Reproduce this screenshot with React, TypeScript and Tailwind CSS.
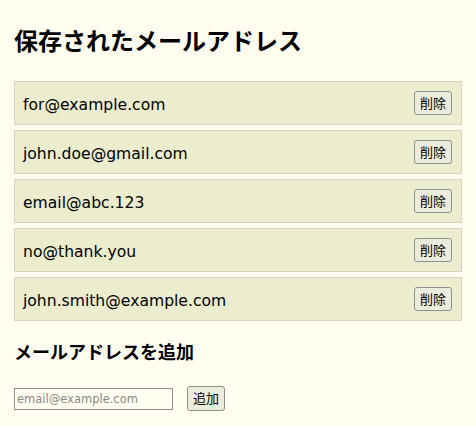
import { useState } from "react";

const initialEmails = [
  "for@example.com",
  "john.doe@gmail.com",
  "email@abc.123",
  "no@thank.you",
  "john.smith@example.com",
];

export default function App() {
  const [emails, setEmails] = useState<string[]>(initialEmails);
  const [input, setInput] = useState("");

  const addEmail = () => {
    if (!input) return;
    setEmails([...emails, input]);
    setInput("");
  };

  return (
    <main
      className="min-h-[426px] w-full bg-[#fffef0] px-[14px] pt-[26px] text-black"
      style={{ fontFamily: '"DejaVu Sans", "Noto Sans CJK JP", sans-serif' }}
    >
      <h1 className="text-[24px] font-bold leading-[32px]">保存されたメールアドレス</h1>

      <ul className="mt-[23px] flex flex-col gap-[5px]">
        {emails.map((email, i) => (
          <li
            key={i}
            className="flex h-[44px] items-center justify-between border border-[#d4d4c4] bg-[#ececcf] pl-[8px] pr-[9px]"
          >
            <span className="pt-[3px] text-[15.6px] leading-[20px]">{email}</span>
            <button
              onClick={() => setEmails(emails.filter((_, j) => j !== i))}
              className="h-[24px] rounded-[3px] border border-[#8f8f8f] bg-[#ececdc] px-[5px] text-[13px] leading-none"
            >
              削除
            </button>
          </li>
        ))}
      </ul>

      <h2 className="mt-[19px] text-[18px] font-bold leading-[26px]">メールアドレスを追加</h2>

      <div className="mt-[20px] flex items-center gap-[14px]">
        <input
          value={input}
          onChange={(e) => setInput(e.target.value)}
          placeholder="email@example.com"
          className="h-[22px] w-[159px] border border-[#8f8f8f] bg-[#fffef0] px-[2px] text-[11.5px] placeholder:text-[#8a8a8a]"
        />
        <button
          onClick={addEmail}
          className="h-[25px] rounded-[3px] border border-[#8f8f8f] bg-[#ececdc] px-[5px] text-[13px] leading-none"
        >
          追加
        </button>
      </div>
    </main>
  );
}
